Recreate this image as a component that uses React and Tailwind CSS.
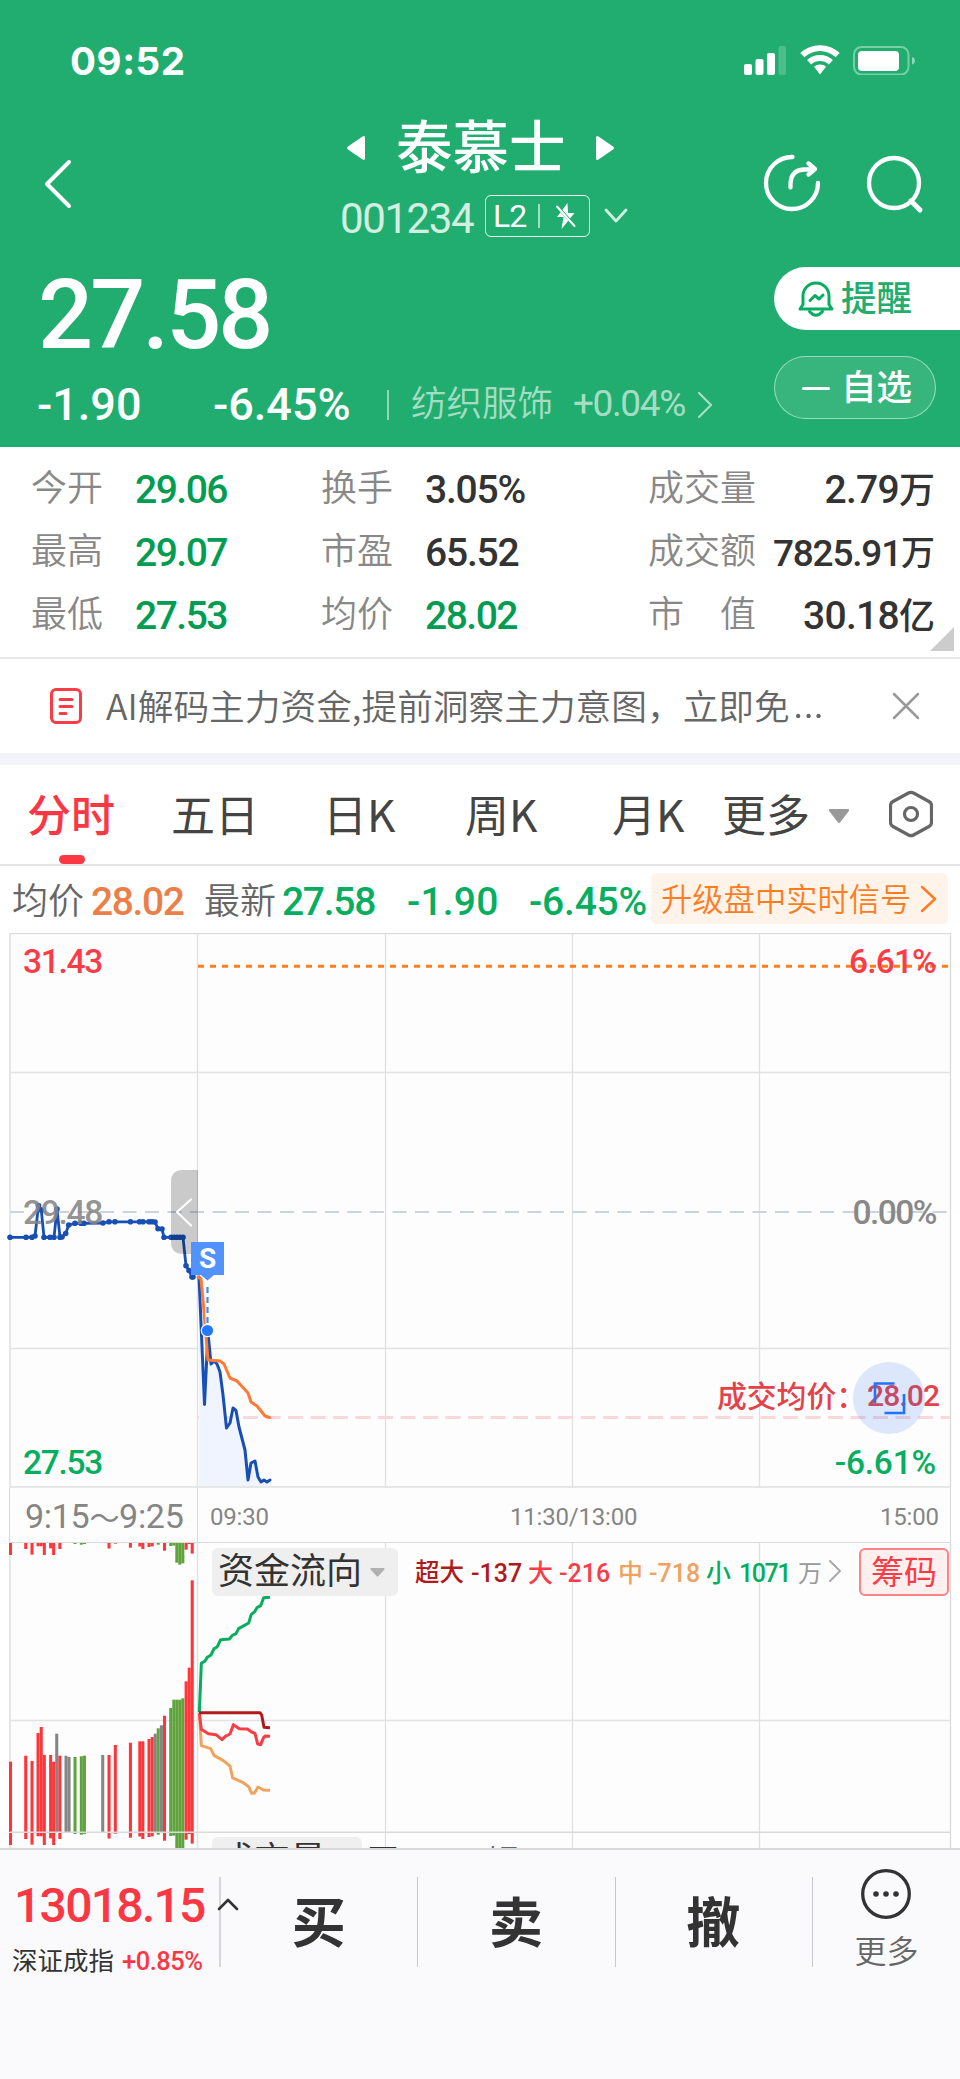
import React from 'react';

const RED = '#ff3639';
const GREEN = '#5fa33d';
const GRAY = '#858585';

// Auction volume bars: [x, top, drop below the axis, colour]
const BARS = [
  [10.5, 1761.7, 12, RED], [25.7, 1755.7, 6, RED], [32, 1761, 11.6, RED], [38, 1733, 3.3, RED],
  [41.2, 1727, 3.3, RED], [44.3, 1755, 12, RED], [50.6, 1755, 5.3, RED], [53.6, 1761.7, 12, RED],
  [56.7, 1733.7, 0, GRAY], [59.8, 1755.7, 6, RED], [66, 1755.7, 0, GRAY], [69, 1757, 0, GRAY],
  [75, 1757, 1, GREEN], [81.3, 1756.3, 1.7, GREEN], [84.4, 1755.7, 1, GREEN], [102.7, 1755, 0, GRAY],
  [109, 1755, 5.5, RED], [115.3, 1745, 0.7, RED], [130.4, 1742.7, 4.7, RED], [139.8, 1741.3, 3.5, RED],
  [142.8, 1741.3, 6, RED], [149, 1739, 4, RED], [152.2, 1737, 3.3, RED], [155.2, 1733.7, 0, GRAY],
  [158.2, 1728.3, 1.7, GREEN], [161.4, 1725.3, 0, GRAY], [164.5, 1715.7, 7.7, RED], [170.7, 1708, 3, GREEN],
  [173.8, 1699.7, 2.6, GREEN], [176.8, 1699.7, 19.7, GREEN], [179.8, 1699.7, 21.7, GREEN],
  [182.8, 1698.3, 20.3, GREEN], [186.1, 1681.3, 6.7, RED], [189.2, 1667.7, 1, RED], [192.2, 1580.3, 10.6, RED],
];

const AUCTION = [
  [10, 1237.3], [26, 1237.3], [32, 1237.3], [35, 1236], [38.5, 1205.5], [41.3, 1210], [44, 1237.3], [50, 1237.3],
  [54, 1237.3], [57, 1209], [60, 1237.3], [62, 1237], [65.7, 1233.5], [68.7, 1225], [75, 1223.3], [81, 1223.3], [84, 1223.3],
  [103, 1223], [109, 1221.8], [115, 1221.8], [130.5, 1221.8], [139.5, 1221.8], [143, 1221.8], [149, 1221.8],
  [152, 1221.8], [155, 1222], [158, 1228.7], [162, 1229], [164, 1237.3], [171, 1237.3], [174, 1237.3], [177, 1237.3],
  [180, 1237.3], [183, 1237.3], [186, 1265.7], [189, 1270.5], [192, 1277], [193, 1277],
];

const PRICE =
  '199,1277 204.5,1404.5 208,1333 211,1364 214,1361 217,1364 220,1372 223,1395 226.5,1428 230,1423 233,1408 236,1410.5 239,1427 245,1450 248,1480 251,1463 255,1461 258,1477 261,1482 264,1480 267,1482 270,1480';

const V_LINES = [197.5, 385.5, 572.5, 759.5];

function Chevron({ className, points, viewBox, width, stroke = 'currentColor' }) {
  return (
    <svg className={className} viewBox={viewBox} fill="none">
      <polyline points={points} stroke={stroke} strokeWidth={width} strokeLinecap="round" strokeLinejoin="round" />
    </svg>
  );
}

function StatusBar() {
  return (
    <div className="flex h-[120px] items-center justify-between pr-[45px] pl-[70px]">
      <span className="mt-[3px] font-['Inter'] text-[38.500px] leading-none font-bold tracking-[0.600px]">09:52</span>
      <svg className="h-[30px] w-[172px]" viewBox="743 45 172 30">
        <g fill="#fff">
          <rect x="744" y="64" width="8" height="11" rx="2" />
          <rect x="755.5" y="59" width="8" height="16" rx="2" />
          <rect x="767" y="53" width="8" height="22" rx="2" />
          <rect x="778.5" y="46" width="7.5" height="29" rx="2" opacity=".2" />
          <path d="M820 45.2c7.600 0 14.500 3 19.700 7.800l-4 4.300a23 23 0 0 0-31.400 0l-4-4.300a29 29 0 0 1 19.700-7.800Z" />
          <path d="M820 55c5 0 9.500 1.900 12.900 5l-4.100 4.400a13 13 0 0 0-17.600 0l-4.100-4.400a19 19 0 0 1 12.900-5Z" />
          <path d="M820 64.500c2.300 0 4.400.9 6 2.300l-6 7.800-6-7.800a9 9 0 0 1 6-2.300Z" />
          <rect x="858" y="51" width="41" height="20" rx="4" />
          <path d="M912 57c2 .6 3 2 3 3.800s-1 3.200-3 3.800Z" opacity=".5" />
        </g>
        <rect x="854" y="47" width="54.500" height="27.500" rx="7.500" fill="none" stroke="#fff" strokeOpacity=".4" strokeWidth="2" />
      </svg>
    </div>
  );
}

function TitleBar() {
  return (
    <div className="flex h-[130px] items-start">
      <div className="w-[340px] pt-[38px] pl-[43px]">
        <Chevron className="h-[52px] w-[32px]" viewBox="0 0 32 52" points="26,4 4,26 26,48" width="4" />
      </div>
      <div className="w-[300px]">
        <div className="flex h-[55px] items-center pl-[6px]">
          <svg className="h-[28px] w-5" viewBox="0 0 20 28">
            <path d="M19 4v20q0 3-2.500 1.400L2 15.500q-2-1.500 0-3L16.500 2.600Q19 1 19 4Z" fill="#fff" />
          </svg>
          <span className="-mt-[8px] ml-[30px] w-[174px] text-[56.500px] leading-none font-medium">泰慕士</span>
          <svg className="ml-[25px] h-[28px] w-5" viewBox="0 0 20 28">
            <path d="M1 4v20q0 3 2.500 1.400L18 15.500q2-1.500 0-3L3.500 2.600Q1 1 1 4Z" fill="#fff" />
          </svg>
        </div>
        <div className="mt-[20px] flex h-[42px] items-center">
          <span className="mt-[5px] w-[145px] font-['Roboto'] text-[42px] leading-none tracking-[-1.400px] text-white/80">001234</span>
          <div className="flex h-[42px] w-[105px] items-center rounded-[6px] border-[1.500px] border-white/90 pl-[7px]">
            <span className="w-[36px] font-['Roboto'] text-[32px] leading-none tracking-[-1px]">L2</span>
            <span className="ml-[9px] h-6 w-[2px] bg-white/60" />
            <svg className="ml-[14px] h-[30px] w-[24px]" viewBox="0 0 24 30">
              <path d="M13.500 2 3 16h6.500L7.500 28 20.500 12H14Z" fill="#fff" />
              <path d="M1.500 3.500 21 25" stroke="#21ad6f" strokeWidth="3" />
              <path d="M3 5.500 20.500 25" stroke="#fff" strokeWidth="2" strokeLinecap="round" />
            </svg>
          </div>
          <Chevron className="ml-[14px] h-[16px] w-[24px] opacity-80" viewBox="0 0 24 16" points="2,2 12,13 22,2" width="2.800" />
        </div>
      </div>
      <svg className="mt-[32px] ml-[120px] h-[64px] w-[166px]" viewBox="760 152 166 64" fill="none" stroke="#fff" strokeWidth="4.300" strokeLinecap="round" strokeLinejoin="round">
        <path d="M792.500 157A26 26 0 1 0 818 183" />
        <path d="M790.500 187.500V184Q791 169.500 805 169.500h9" />
        <path d="M808.500 163.500l6.500 5.500-6.500 5.500" />
        <circle cx="894" cy="183" r="25" />
        <path d="M911 201l9 9" strokeWidth="5" />
      </svg>
    </div>
  );
}

function Quote() {
  return (
    <div className="flex justify-between">
      <div className="flex flex-col">
        <div className="mt-[17px] h-[96px] pl-[38px] font-['Roboto'] text-[97px] leading-[96px] font-medium tracking-[-3px]">27.58</div>
        <div className="mt-[17px] flex h-[50px] items-center pl-[37px] font-['Roboto'] leading-none">
          <span className="-mt-px w-[176px] text-[45px] font-medium">-1.90</span>
          <span className="-mt-px w-[174px] text-[45px] font-medium">-6.45%</span>
          <span className="h-[30px] w-[2px] bg-white/50" />
          <span className="-mt-[9px] ml-[22px] w-[162px] font-['Noto_Sans_CJK_SC'] text-[35.500px] font-[350] text-white/60">纺织服饰</span>
          <span className="-mt-[3px] w-[123px] text-[37px] tracking-[-1.400px] text-white/60">+0.04%</span>
          <Chevron className="h-[28px] w-[18px] opacity-60" viewBox="0 0 18 28" points="3,2 15,14 3,26" width="2.200" />
        </div>
      </div>
      <div className="flex w-[186px] flex-col gap-[26px] pt-[17px]">
        <div className="flex h-[63px] items-center rounded-l-full bg-white pl-[24px] text-[#21ad6f]">
          <svg className="h-[38px] w-[36px]" viewBox="0 0 36 38" fill="none" stroke="#07ae60" strokeWidth="3" strokeLinecap="round" strokeLinejoin="round">
            <path d="M5 24.500V16a13 13 0 0 1 26 0v8.500l3 4.500H2Z" />
            <path d="M11.500 31.500q6.500 7.500 13 0" />
            <path d="M12 20.500l5-5 4 3.500 4-4" />
          </svg>
          <span className="-mt-[5px] ml-[7px] text-[35.500px] leading-none font-medium">提醒</span>
        </div>
        <div className="flex h-[63px] w-[162px] items-center rounded-full border border-white/50 bg-white/10 pl-[27px]">
          <span className="mt-[2px] h-[3px] w-[28px] rounded-full bg-white" />
          <span className="-mt-[5px] ml-[11px] text-[35.500px] leading-none font-medium">自选</span>
        </div>
      </div>
    </div>
  );
}

const STATS = [
  [['今开', '29.06', 1], ['换手', '3.05%', 0], ['成交量', '2.79', '万']],
  [['最高', '29.07', 1], ['市盈', '65.52', 0], ['成交额', '7825.91', '万']],
  [['最低', '27.53', 1], ['均价', '28.02', 1], ['市　值', '30.18', '亿']],
];

function Stats() {
  return (
    <section className="relative flex h-[212px] flex-col border-b-2 border-[#e8e8ea] pt-[9px]">
      {STATS.map((row, i) => (
        <div key={i} className="flex h-[63px] items-center text-[36px] leading-none text-[#888]">
          {row.slice(0, 2).map(([label, value, down]) => (
            <div key={label} className="flex w-[290px] items-center pl-[31px]">
              <span className="-mt-[5px] w-[104px] font-[350]">{label}</span>
              <span className={`mt-[5px] font-['Roboto'] text-[39px] font-medium ${down ? 'tracking-[-1.500px] text-[#029c52]' : 'tracking-[-1.200px] text-[#333]'}`}>{value}</span>
            </div>
          ))}
          <div className="flex w-[355px] items-center justify-between pl-[68px]">
            <span className="-mt-[5px] font-[350]">{row[2][0]}</span>
            <span className="flex items-center text-[#333]">
              <span className={`mt-[5px] font-['Roboto'] font-medium ${i === 1 ? 'text-[37px] tracking-[-1.200px]' : 'text-[39px] tracking-[-0.700px]'}`}>{row[2][1]}</span>
              <span className={`font-medium ${i === 1 ? 'text-[34px]' : '-mt-[2px] text-[36px]'}`}>{row[2][2]}</span>
            </span>
          </div>
        </div>
      ))}
      <svg className="absolute right-[6px] bottom-[6px] h-6 w-6" viewBox="0 0 24 24">
        <path d="M24 0v24H0Z" fill="#ccc" />
      </svg>
    </section>
  );
}

function Notice() {
  return (
    <section className="flex h-[94px] items-center pl-[50px]">
      <svg className="h-[36px] w-8" viewBox="0 0 32 36" fill="none" stroke="#fb3c47" strokeWidth="3" strokeLinecap="round">
        <rect x="1.500" y="1.500" width="29" height="33" rx="4.500" />
        <path d="M10 11.500h12M10 18.500h12M10 25.500h6" />
      </svg>
      <span className="-mt-[2px] ml-[24px] flex w-[786px] items-center text-[35.700px] leading-none font-[350] whitespace-nowrap text-[#666]">
        <span>AI解码主力资金,提前洞察主力意图，立即免</span>
        <span className="-mt-[9px] ml-[2px] font-['Roboto'] text-[52px]">…</span>
      </span>
      <svg className="h-7 w-7" viewBox="0 0 28 28" stroke="#999" strokeWidth="2.500" strokeLinecap="round">
        <path d="M2 2l24 24M26 2 2 26" />
      </svg>
    </section>
  );
}

function Tabs() {
  return (
    <nav className="flex h-[101px] items-start border-b-2 border-[#e4e4e4] text-[44px] leading-none text-[#444]">
      <div className="flex h-full w-[171px] flex-col justify-between pt-[26px] pl-[27px]">
        <span className="font-medium text-[#fb3743]">分时</span>
        <span className="ml-[32px] h-[9px] w-[26px] rounded-full bg-[#fb3743]" />
      </div>
      <span className="mt-[26px] w-[152px]">五日</span>
      <span className="mt-[26px] w-[142px]">日K</span>
      <span className="mt-[26px] w-[147px]">周K</span>
      <span className="mt-[26px] w-[110px]">月K</span>
      <span className="mt-[26px] w-[106px]">更多</span>
      <svg className="mt-[43px] h-4 w-[22px]" viewBox="0 0 22 16">
        <path d="M2 1h18q2 .5.500 2.500L12 14.500q-1 .8-2 0L1.500 3.500Q0 1.500 2 1Z" fill="#999" />
      </svg>
      <svg className="mt-[25px] ml-[39px] h-[48px] w-[44px]" viewBox="0 0 44 48" fill="none" stroke="#666" strokeWidth="3.200" strokeLinejoin="round">
        <path d="M19.500 3q2.500-1.300 5 0L40 11.500q2.500 1.400 2.500 4v17q0 2.600-2.500 4L24.500 45q-2.500 1.300-5 0L4 36.500q-2.500-1.400-2.500-4v-17q0-2.600 2.500-4Z" />
        <circle cx="22" cy="24" r="6.500" />
      </svg>
    </nav>
  );
}

function InfoRow() {
  return (
    <div className="flex h-[67px] items-center pl-3 text-[36px] leading-none text-[#666]">
      <span className="-mt-[4px] w-[79px] font-[350]">均价</span>
      <span className="mt-[5px] w-[113px] font-['Roboto'] text-[39px] font-medium tracking-[-1.400px] text-[#ec7f49]">28.02</span>
      <span className="-mt-[4px] w-[78px] font-[350]">最新</span>
      <span className="mt-[5px] flex w-[369px] font-['Roboto'] text-[39px] font-medium text-[#07ae60]">
        <span className="w-[125px] tracking-[-1.300px]">27.58</span>
        <span className="w-[122px] tracking-[0.200px]">-1.90</span>
        <span className="tracking-[-0.200px]">-6.45%</span>
      </span>
      <div className="-mt-[2px] flex h-[51px] w-[297px] items-center rounded-[6px] bg-[#fff3ea] pl-[10px] text-[#ff7d1f]">
        <span className="-mt-[1px] w-[258px] text-[31.300px] font-[350] whitespace-nowrap">升级盘中实时信号</span>
        <Chevron className="h-[28px] w-[18px]" viewBox="0 0 18 28" points="3,2 16,14 3,26" width="2.400" />
      </div>
    </div>
  );
}

const LABEL = "absolute font-['Roboto'] text-[33.500px] leading-none font-medium";

function PricePanel() {
  return (
    <div className="relative h-[555px]">
      <svg className="absolute inset-0 h-[555px] w-[960px]" viewBox="0 933 960 555" fill="none">
        <rect x="10" y="933.500" width="940.500" height="553.500" fill="#fdfdfe" stroke="#dadada" strokeWidth="1.300" />
        {V_LINES.map((x) => (
          <path key={x} d={`M${x} 934V1487`} stroke="#e0e0e0" strokeWidth="1.300" />
        ))}
        <path d="M10 1072.500H950M10 1348.500H950" stroke="#e2e2e2" strokeWidth="1.300" />
        <path d="M10 1212H950" stroke="#c8d4df" strokeWidth="2" strokeDasharray="14 8.500" />
        <path d="M198 966.300H950" stroke="#ff7d1f" strokeWidth="3" strokeDasharray="6 6" />
        <path d="M198 1417.500H950" stroke="#fad7da" strokeWidth="2.800" strokeDasharray="15 7.500" />
        <polygon points={`${PRICE} 271,1480 271,1486 199,1486`} fill="#eff4fe" />
      </svg>
      <span className={`${LABEL} top-[12px] right-[24px] tracking-[-0.800px] text-[#fb3c47]`}>6.61%</span>
      <svg className="absolute inset-0 h-[555px] w-[960px]" viewBox="0 933 960 555" fill="none" strokeLinejoin="round" strokeLinecap="round">
        <polyline points={AUCTION.map((p) => p.join(',')).join(' ')} stroke="#174fb5" strokeWidth="2.800" />
        {AUCTION.map(([x, y], i) => (
          <circle key={i} cx={x} cy={y} r="2.800" fill="#174fb5" />
        ))}
        <polyline points={PRICE} stroke="#174fb5" strokeWidth="3" />
        <polyline
          points="198,1277 201,1279 203,1300 208,1360 220,1361 224,1364 230,1378 237,1381 248,1393 251,1402 257,1406 265,1416 269.500,1417.500"
          stroke="#ff7a36"
          strokeWidth="3"
        />
        <path d="M198 1170v84h-15q-12 0-12-12v-60q0-12 12-12Z" fill="#000" fillOpacity=".2" />
        <path d="M191 1199.500 177 1212l14 13.500" stroke="#fff" strokeWidth="2.200" />
        <path d="M191 1242h33v33h-10l-6.500 5.500-6.500-5.500h-10Z" fill="#5192ff" />
        <path d="M207.500 1282v44" stroke="#fff" strokeWidth="4" strokeLinecap="butt" />
        <path d="M207.500 1287v40" stroke="#4188ff" strokeWidth="2.200" strokeDasharray="6 4" strokeLinecap="butt" />
        <circle cx="207.500" cy="1330.500" r="6.200" fill="#2478ff" stroke="#fff" strokeWidth="1.200" />
      </svg>
      <span className="absolute top-[312px] left-[199px] font-['Roboto'] text-[28px] leading-none font-bold text-white">S</span>
      <span className={`${LABEL} top-[12px] left-[23px] tracking-[-1.300px] text-[#fb3c47]`}>31.43</span>
      <span className={`${LABEL} top-[263px] left-[23px] tracking-[-1.300px] text-[#858585]/90`}>29.48</span>
      <span className={`${LABEL} top-[263px] right-[24px] tracking-[-1.500px] text-[#888]`}>0.00%</span>
      <span className={`${LABEL} top-[513px] left-[23px] tracking-[-1.300px] text-[#07ae60]`}>27.53</span>
      <span className={`${LABEL} top-[513px] right-[24px] tracking-[-0.200px] text-[#07ae60]`}>-6.61%</span>
      <div className="absolute top-[445px] left-[717px] flex items-center leading-none font-medium whitespace-nowrap text-[#e4414a]">
        <span className="w-[150px] text-[29.800px]">成交均价：</span>
        <span className="mt-[3px] font-['Roboto'] text-[30px] tracking-[-0.900px]">28.02</span>
      </div>
      <svg className="absolute top-[429px] left-[853px] h-[72px] w-[72px]" viewBox="853 1362 72 72" fill="none">
        <circle cx="889" cy="1398" r="36" fill="#2f74f5" fillOpacity=".16" />
        <path d="M875 1403v-19.500h19.500M904 1394v19h-19.500" stroke="#1f74ff" strokeWidth="2.600" />
      </svg>
    </div>
  );
}

function TimeAxis() {
  return (
    <div className="mx-[9px] flex h-[55px] items-center border-x border-b border-[#dadada] bg-[#fdfdfe] font-['Roboto'] leading-none text-[#858585]">
      <div className="flex h-full w-[188px] items-center border-r border-[#dadada] pt-[2px] pl-[15px] text-[34px] tracking-[-0.300px]">
        <span>9:15</span>
        <span className="font-['Noto_Sans_CJK_SC'] text-[30px]">～</span>
        <span>9:25</span>
      </div>
      <div className="mt-[3px] flex flex-1 text-[24px] tracking-[-0.200px]">
        <span className="w-[300px] pl-[12px]">09:30</span>
        <span className="w-[370px] pl-[12px]">11:30/13:00</span>
        <span className="pl-[12px]">15:00</span>
      </div>
    </div>
  );
}

function FlowPanel() {
  return (
    <div className="relative h-[305px] overflow-hidden">
      <svg className="absolute inset-0 h-[305px] w-[960px]" viewBox="0 1543 960 305" fill="none">
        <rect x="10" y="1540" width="940.500" height="320" fill="#fdfdfe" stroke="#dadada" strokeWidth="1.300" />
        {V_LINES.map((x) => (
          <path key={x} d={`M${x} 1543V1848`} stroke="#e0e0e0" strokeWidth="1.300" />
        ))}
        <path d="M10 1720.500H950" stroke="#e2e2e2" strokeWidth="1.300" />
        {BARS.map(([x, top, drop, color], i) => (
          <g key={i} fill={color}>
            <rect x={x - 1.500} y={top} width="3.050" height={1832 - top} />
            <rect x={x - 1.500} y="1543" width="3.050" height={drop} />
            <rect x={x - 1.500} y="1833" width="3.050" height={drop} />
          </g>
        ))}
        <path d="M10 1832.300H950" stroke="#dadada" strokeWidth="1.500" />
        <g transform="translate(0 1520) scale(.33333)" strokeWidth="9" strokeLinejoin="round">
          <polyline stroke="#f2a25c" points="599,590 604,677 632,686 642,706 670,722 690,738 698,774 728,787 746,800 755,820 763,820 774,801 790,810 810,811" />
          <polyline stroke="#fb3c47" points="598,580 604,628 625,641 648,644 666,659 676,649 690,642 700,614 718,626 742,627 755,636 765,640 773,672 782,674 791,652 796,648 810,649" />
          <polyline stroke="#07ae60" points="598,577 604,430 614,424 622,412 633,405 642,386 652,380 662,359 688,357 697,346 708,341 716,326 732,317 746,309 754,283 764,275 771,263 782,257 791,233 810,232" />
          <polyline stroke="#b01a1a" points="597,578 780,578 785,585 792,622 810,623" />
        </g>
      </svg>
      <div className="relative flex items-center pt-[5px] pl-[212px] leading-none">
        <div className="flex h-12 w-[186px] items-center rounded-[6px] bg-[#efefef] pl-[6px] text-[#333]">
          <span className="-mt-[8px] text-[36px]">资金流向</span>
          <svg className="ml-[8px] h-[9px] w-[15px]" viewBox="0 0 15 9">
            <path d="M1 0h13q1 .5.500 1.500L8.500 8q-1 1-2 0L.5 1.500Q0 .5 1 0Z" fill="#b0b0b0" />
          </svg>
        </div>
        <div className="mt-[3px] ml-[17px] flex w-[444px] items-center text-[25px] font-medium whitespace-nowrap">
          <span className="-mt-[4px] w-[56px] text-[24.500px] text-[#b01a1a]">超大</span>
          <span className="w-[57px] font-['Roboto'] text-[#b01a1a]">-137</span>
          <span className="-mt-[4px] w-[31px] text-[#fb3c47]">大</span>
          <span className="w-[59px] font-['Roboto'] text-[#fb3c47]">-216</span>
          <span className="-mt-[4px] w-[31px] text-[#f2a25c]">中</span>
          <span className="w-[57px] font-['Roboto'] text-[#f2a25c]">-718</span>
          <span className="-mt-[4px] w-[33px] text-[#07ae60]">小</span>
          <span className="w-[59px] font-['Roboto'] tracking-[-1.500px] text-[#07ae60]">1071</span>
          <span className="-mt-[4px] w-[30px] text-[24px] font-normal text-[#999]">万</span>
          <Chevron className="-mt-[6px] h-[22px] w-[14px] text-[#aaa]" viewBox="0 0 14 22" points="2,1 12,11 2,21" width="2" />
        </div>
        <div className="flex h-12 w-[90px] items-center justify-center rounded-[6px] border-2 border-[#ff8286] bg-[#ffefef]">
          <span className="-mt-[4px] text-[33px] text-[#fb3c47]">筹码</span>
        </div>
      </div>
      <div className="absolute top-[294px] left-[212px] flex items-start text-[36px] leading-none">
        <div className="h-12 w-[150px] rounded-[6px] bg-[#efefef] pt-[2px] pl-[6px] text-[#333]">成交量</div>
        <span className="mt-[5px] ml-[6px] text-[30px] text-[#333]">万</span>
        <span className="mt-[6px] ml-[90px] text-[30px] text-[#666]">短</span>
      </div>
    </div>
  );
}

function BottomBar() {
  return (
    <footer className="flex flex-1 items-start border-t-2 border-[#dadadc] bg-[#fafafc] text-[#333]">
      <div className="relative w-[221px] pt-[27px]">
        <div className="h-[90px] border-r-2 border-[#d6d6da]">
          <div className="pt-[5px] pl-[14px] font-['Roboto'] text-[48px] leading-none font-medium tracking-[-1.700px] text-[#fb3743]">13018.15</div>
          <div className="mt-[17px] flex items-center pl-[12px] leading-none whitespace-nowrap">
            <span className="-mt-[4px] w-[110px] text-[25.500px]">深证成指</span>
            <span className="mt-[2px] font-['Roboto'] text-[25.500px] font-medium tracking-[-0.500px] text-[#fb3743]">+0.85%</span>
          </div>
        </div>
        <Chevron className="absolute top-[47px] left-[217px] h-[14px] w-[22px] text-[#333]" viewBox="0 0 22 14" points="2,12 11,3 20,12" width="2.600" />
      </div>
      {['买', '卖', '撤'].map((t) => (
        <div key={t} className="mt-[27px] flex h-[90px] w-[197.300px] items-center justify-center border-r border-[#c8c8cc]">
          <span className="-mt-[5px] -ml-[1px] text-[54px] leading-none font-bold">{t}</span>
        </div>
      ))}
      <div className="flex flex-1 flex-col items-center pt-[18px]">
        <svg className="h-[52px] w-[52px]" viewBox="0 0 52 52" fill="none">
          <circle cx="26" cy="26" r="23.300" stroke="#333" strokeWidth="3.300" />
          <g fill="#333">
            <circle cx="16" cy="26" r="2.800" />
            <circle cx="26" cy="26" r="2.800" />
            <circle cx="36" cy="26" r="2.800" />
          </g>
        </svg>
        <span className="mt-[13px] text-[32px] leading-none font-[350] text-[#666]">更多</span>
      </div>
    </footer>
  );
}

export default function App() {
  return (
    <main className="flex h-[2079px] w-[960px] flex-col overflow-hidden bg-white font-['Noto_Sans_CJK_SC',sans-serif]">
      <header className="h-[447px] shrink-0 bg-[#21ad6f] text-white">
        <StatusBar />
        <TitleBar />
        <Quote />
      </header>
      <Stats />
      <Notice />
      <div className="h-3 bg-[#f3f4f9]" />
      <Tabs />
      <InfoRow />
      <PricePanel />
      <TimeAxis />
      <FlowPanel />
      <BottomBar />
    </main>
  );
}
